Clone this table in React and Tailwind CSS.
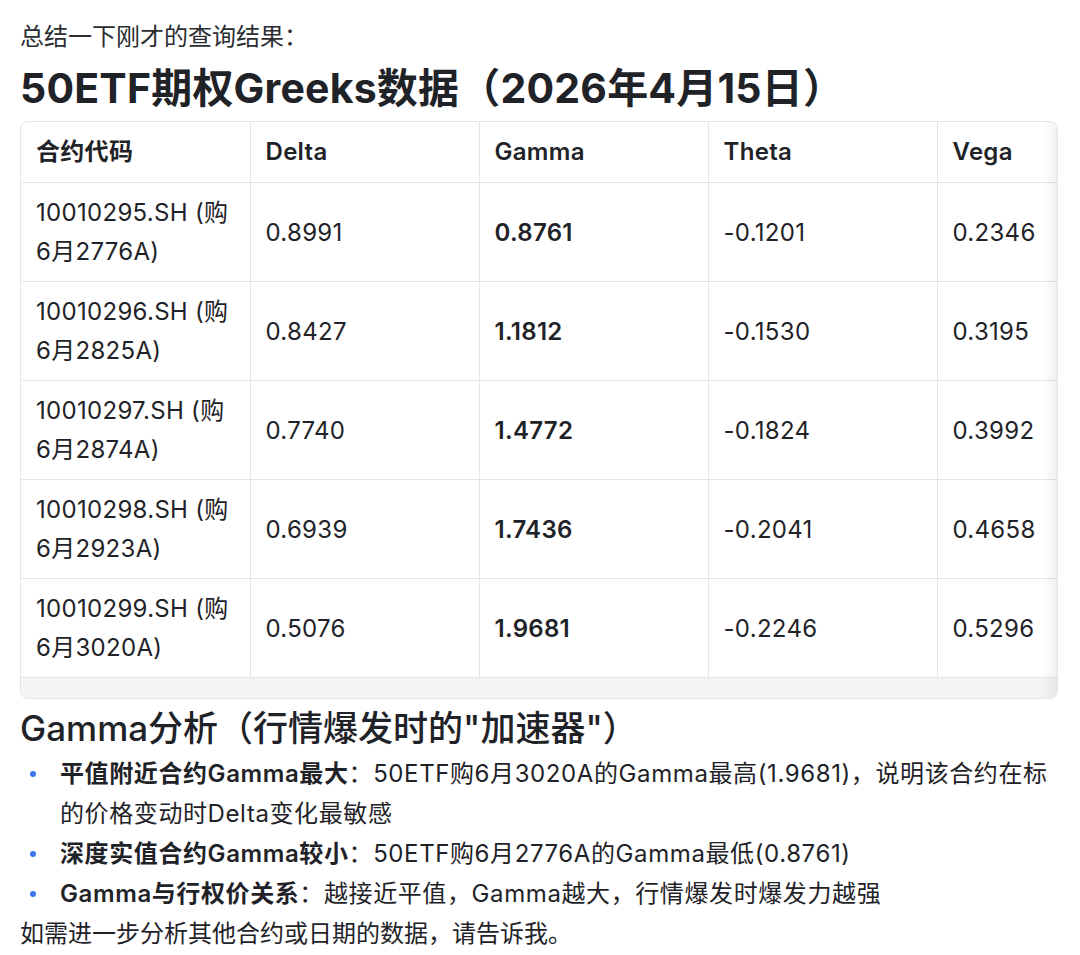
import React from 'react'

const rows = [
  { code: '10010295.SH (购6月2776A)', delta: '0.8991', gamma: '0.8761', theta: '-0.1201', vega: '0.2346' },
  { code: '10010296.SH (购6月2825A)', delta: '0.8427', gamma: '1.1812', theta: '-0.1530', vega: '0.3195' },
  { code: '10010297.SH (购6月2874A)', delta: '0.7740', gamma: '1.4772', theta: '-0.1824', vega: '0.3992' },
  { code: '10010298.SH (购6月2923A)', delta: '0.6939', gamma: '1.7436', theta: '-0.2041', vega: '0.4658' },
  { code: '10010299.SH (购6月3020A)', delta: '0.5076', gamma: '1.9681', theta: '-0.2246', vega: '0.5296' },
]

const points = [
  {
    b: '平值附近合约Gamma最大',
    t: (
      <>
        50ETF购6月3020A的Gamma最高(1.9681)，说明该合约在标
        <br />
        的价格变动时Delta变化最敏感
      </>
    ),
  },
  { b: '深度实值合约Gamma较小', t: '50ETF购6月2776A的Gamma最低(0.8761)' },
  { b: 'Gamma与行权价关系', t: '越接近平值，Gamma越大，行情爆发时爆发力越强' },
]

export default function App() {
  return (
    <div className="min-h-screen bg-white pl-[20px] pr-[22px] pt-[18px] text-[#1f2328] font-['Inter','Noto_Sans_CJK_SC',sans-serif]">
      <p className="text-[24px] leading-[38px] text-[#2a2d31]">总结一下刚才的查询结果：</p>
      <h2 className="mt-[7px] text-[41px] font-bold leading-[50px] tracking-[0.2px]">
        50ETF期权Greeks数据（2026年4月15日）
      </h2>

      {/* 表格：右侧被截断，可横向滚动 */}
      <div className="relative mt-[8px] overflow-hidden rounded-[8px] border border-[#e3e5e8]">
        <table className="w-[1145px] table-fixed border-collapse text-left text-[24px] tracking-[0.3px]">
          <thead>
            <tr>
              {['合约代码', 'Delta', 'Gamma', 'Theta', 'Vega'].map(h => (
                <th
                  key={h}
                  className="w-[229px] border-r border-b border-[#e3e5e8] px-[15px] py-[10px] font-semibold leading-[40px]"
                >
                  {h}
                </th>
              ))}
            </tr>
          </thead>
          <tbody>
            {rows.map(r => (
              <tr key={r.code}>
                <td className="border-r border-b border-[#e3e5e8] px-[15px] py-[10px] leading-[39px]">{r.code}</td>
                <td className="border-r border-b border-[#e3e5e8] px-[15px] py-[10px] leading-[39px]">{r.delta}</td>
                <td className="border-r border-b border-[#e3e5e8] px-[15px] py-[10px] font-semibold leading-[39px]">{r.gamma}</td>
                <td className="border-r border-b border-[#e3e5e8] px-[15px] py-[10px] leading-[39px]">{r.theta}</td>
                <td className="border-r border-b border-[#e3e5e8] px-[15px] py-[10px] leading-[39px]">{r.vega}</td>
              </tr>
            ))}
          </tbody>
        </table>
        <div className="h-[20px] bg-[#f3f4f6]" />
        <div className="pointer-events-none absolute top-0 right-0 bottom-0 w-[14px] bg-gradient-to-l from-black/[0.06] to-transparent" />
      </div>

      <h3 className="mt-[9px] text-[35px] font-medium leading-[40px]">Gamma分析（行情爆发时的"加速器"）</h3>
      <ul className="mt-[6px] text-[24px] leading-[40px] tracking-[0.6px]">
        {points.map(p => (
          <li key={p.b} className="flex">
            <span className="flex h-[40px] w-[40px] shrink-0 items-center pl-[10px]">
              <span className="h-[6px] w-[6px] rounded-full bg-[#3b74f0]" />
            </span>
            <span>
              <span className="font-semibold">{p.b}</span>：{p.t}
            </span>
          </li>
        ))}
      </ul>
      <p className="text-[24px] leading-[40px]">如需进一步分析其他合约或日期的数据，请告诉我。</p>
    </div>
  )
}
